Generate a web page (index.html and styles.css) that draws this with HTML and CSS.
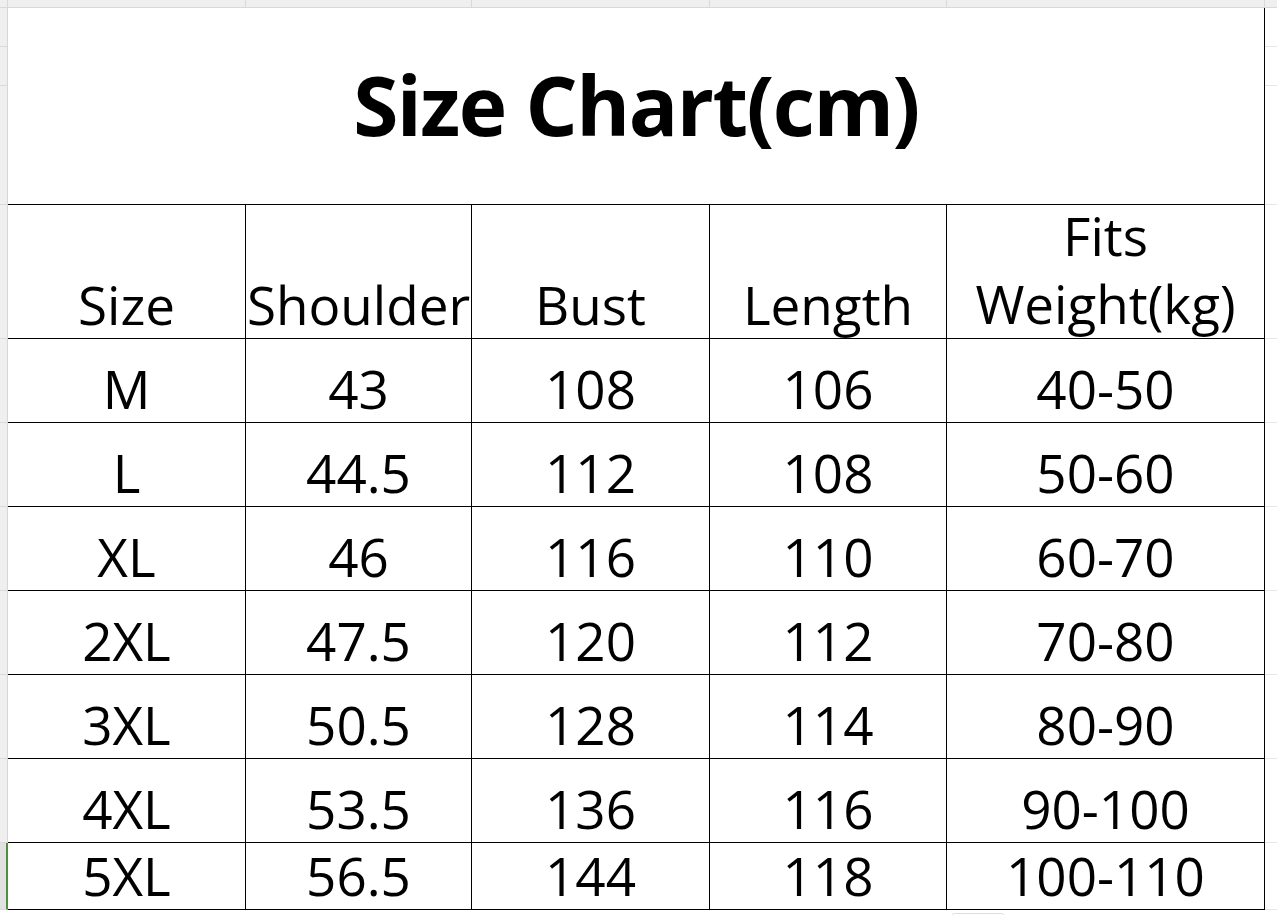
FILE: index.html
```html
<!DOCTYPE html>
<html>
<head>
<meta charset="utf-8">
<link rel="stylesheet" href="styles.css">
</head>
<body>
<div class="page">
  <div class="topband">
    <div class="tb-seg tb-left"></div>
    <div class="tb-seg" style="width:238px"></div>
    <div class="tb-seg" style="width:226px"></div>
    <div class="tb-seg" style="width:238px"></div>
    <div class="tb-seg" style="width:237px"></div>
    <div class="tb-seg" style="width:318px"></div>
    <div class="tb-seg tb-right"></div>
  </div>
  <div class="middle">
    <div class="strip strip-left">
      <div class="seg" style="height:39px"></div>
      <div class="seg" style="height:39px"></div>
      <div class="seg" style="height:119px"></div>
      <div class="seg" style="height:134px"></div>
      <div class="seg" style="height:84px"></div>
      <div class="seg" style="height:84px"></div>
      <div class="seg" style="height:84px"></div>
      <div class="seg" style="height:84px"></div>
      <div class="seg" style="height:84px"></div>
      <div class="seg" style="height:84px"></div>
      <div class="seg seg-active" style="height:67px"></div>
    </div>
    <div class="table">
      <div class="cell title">Size Chart(cm)</div>
      <div class="cell">Size</div>
      <div class="cell">Shoulder</div>
      <div class="cell">Bust</div>
      <div class="cell">Length</div>
      <div class="cell head2">Fits<br>Weight(kg)</div>

      <div class="cell">M</div><div class="cell">43</div><div class="cell">108</div><div class="cell">106</div><div class="cell">40-50</div>
      <div class="cell">L</div><div class="cell">44.5</div><div class="cell">112</div><div class="cell">108</div><div class="cell">50-60</div>
      <div class="cell">XL</div><div class="cell">46</div><div class="cell">116</div><div class="cell">110</div><div class="cell">60-70</div>
      <div class="cell">2XL</div><div class="cell">47.5</div><div class="cell">120</div><div class="cell">112</div><div class="cell">70-80</div>
      <div class="cell">3XL</div><div class="cell">50.5</div><div class="cell">128</div><div class="cell">114</div><div class="cell">80-90</div>
      <div class="cell">4XL</div><div class="cell">53.5</div><div class="cell">136</div><div class="cell">116</div><div class="cell">90-100</div>
      <div class="cell">5XL</div><div class="cell">56.5</div><div class="cell">144</div><div class="cell">118</div><div class="cell">100-110</div>
    </div>
    <div class="strip strip-right">
      <div class="rseg" style="height:39px"></div>
      <div class="rseg" style="height:39px"></div>
      <div class="rseg" style="height:119px"></div>
      <div class="rseg" style="height:134px"></div>
      <div class="rseg" style="height:84px"></div>
      <div class="rseg" style="height:84px"></div>
      <div class="rseg" style="height:84px"></div>
      <div class="rseg" style="height:84px"></div>
      <div class="rseg" style="height:84px"></div>
      <div class="rseg" style="height:84px"></div>
      <div class="rseg" style="height:67px"></div>
    </div>
  </div>
  <div class="bottom">
    <div class="tab"></div>
  </div>
</div>
</body>
</html>
```
FILE: styles.css
```css
* { box-sizing: border-box; }
html, body { margin: 0; padding: 0; background: #ffffff; }
body { font-family: "Open Sans", "Noto Sans", "Liberation Sans", sans-serif; color: #000; }

.page {
  width: 1277px;
  height: 915px;
  overflow: hidden;
  display: flex;
  flex-direction: column;
}

.topband {
  height: 8px;
  display: flex;
  flex: none;
  background: #efefef;
  border-bottom: 1px solid #d9d9d9;
}
.tb-seg { height: 100%; border-right: 1px solid #d9d9d9; flex: none; }
.tb-left { width: 8px; }
.tb-right { flex: 1; border-right: none; }

.middle { display: flex; flex: none; }

.strip { display: flex; flex-direction: column; flex: none; }
.strip-left { width: 8px; }
.seg {
  background: #efefef;
  border-right: 1px solid #d6d6d6;
  border-bottom: 1px solid #d9d9d9;
}
.seg-active { background: #e1e1e1; border-right: 2px solid #4f8f3e; }

.strip-right { width: 12px; }
.rseg { border-bottom: 1px solid #e6e6e6; }

.table {
  width: 1257px;
  display: grid;
  grid-template-columns: 238px 226px 238px 237px 318px;
  grid-template-rows: 197px 134px repeat(6, 84px) 67px;
}

.cell {
  border-right: 1px solid #000;
  border-bottom: 1px solid #000;
  display: flex;
  align-items: flex-end;
  justify-content: center;
  text-align: center;
  font-size: 53px;
  line-height: 1;
  padding-bottom: 7px;
  white-space: nowrap;
}

.title {
  grid-column: 1 / -1;
  font-weight: 700;
  font-size: 82px;
  letter-spacing: -1.5px;
  align-items: center;
  padding-bottom: 4px;
  padding-top: 0;
}

.head2 { line-height: 68px; padding-bottom: 0; }

.bottom { flex: 1; position: relative; }
.tab {
  margin-left: 950px;
  margin-top: 3px;
  width: 56px;
  height: 10px;
  border: 1px solid #dedede;
  border-radius: 5px;
}
```
